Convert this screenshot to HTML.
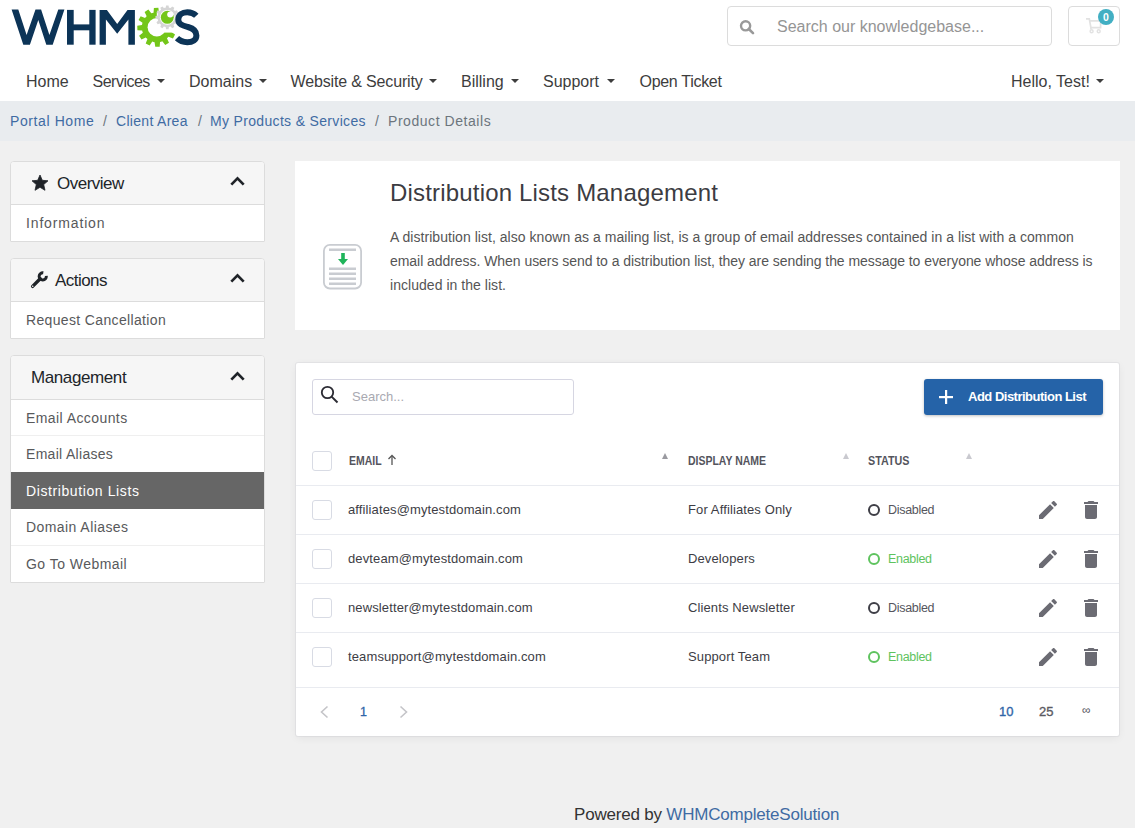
<!DOCTYPE html>
<html><head><meta charset="utf-8">
<style>
*{box-sizing:border-box;margin:0;padding:0}
html,body{width:1135px;height:828px;overflow:hidden}
body{background:#f0f0f0;font-family:"Liberation Sans",sans-serif;position:relative}
.a{position:absolute}
.t{position:absolute;white-space:nowrap;line-height:1}
#hdr{left:0;top:0;width:1135px;height:101px;background:#fff}
#bc{left:0;top:101px;width:1135px;height:40px;background:#e9ecef}
.nav{font-size:16px;color:#3d3d3d;top:73.5px}
.caret{position:absolute;width:0;height:0;border-left:4px solid transparent;border-right:4px solid transparent;border-top:4.5px solid #3d3d3d;top:79px}
.bcl{font-size:14px;color:#3f6ba3;top:113.5px}
.bcs{font-size:14px;color:#6c757d;top:113.5px}
.card{position:absolute;left:10px;width:255px;background:#fff;border:1px solid #dcdcdc;border-radius:4px 4px 1px 1px;overflow:hidden}
.ch{position:absolute;left:0;top:0;width:253px;height:43px;background:#f6f6f6;border-bottom:1px solid #dcdcdc}
.ct{font-size:17px;color:#212529}
.ci{font-size:14px;color:#58595b}
.sep{position:absolute;left:0;width:253px;height:1px;background:#efefef}
.chev{position:absolute;width:10px;height:10px;border-left:2.4px solid #1f2328;border-top:2.4px solid #1f2328;transform:rotate(45deg)}
.panel{position:absolute;left:295px;width:825px;background:#fff}
.rt{font-size:13px;color:#3d3d45;letter-spacing:0.12px}
.th{font-size:12px;font-weight:bold;color:#54545c}
.cb{position:absolute;left:312px;width:20px;height:20px;border:1px solid #d8dbe4;border-radius:3px;background:#fff}
.rsep{position:absolute;left:296px;width:823px;height:1px;background:#e9ebf0}
.st{position:absolute;left:868px;width:12px;height:12px;border-radius:50%;border:2.2px solid #3e3e46}
.st.on{border-color:#5ec35e}
.stt{font-size:12.5px;color:#55555d;letter-spacing:-0.3px}
.stt.on{color:#5ec35e}
.sorttri{position:absolute;width:0;height:0;border-left:3px solid transparent;border-right:3px solid transparent;border-bottom:6px solid #c9c9cf}
</style></head><body>
<div id="hdr" class="a"></div>
<div id="bc" class="a"></div>

<!-- logo -->
<svg class="a" style="left:0;top:0" width="210" height="55" viewBox="0 0 210 55">
  <g fill="#0c3457">
    <polygon points="11.6,9.6 18.3,9.6 26.6,35.1 35.5,9.6 41.1,9.6 49.4,35.1 58.3,9.6 64.4,9.6 52.7,44.8 46.3,44.8 38.3,20.1 29.9,44.8 23.3,44.8"/>
    <rect x="67" y="9.9" width="6.7" height="34.8"/>
    <rect x="89.3" y="9.9" width="6.3" height="34.8"/>
    <rect x="70" y="24.4" width="22" height="5.9"/>
    <polygon points="99.6,9.9 106.9,9.9 117.2,24.1 127.5,9.9 134.9,9.9 134.9,44.7 128.4,44.7 128.4,19.4 117.2,33.8 105.9,19.4 105.9,44.7 99.6,44.7"/>
  </g>
  <!-- green gear -->
  <path d="M171.14,22.91 L171.44,24.05 L176.18,24.40 L176.34,28.84 L171.64,29.52 L171.42,30.67 L171.11,31.81 L175.04,34.48 L172.95,38.40 L168.54,36.64 L167.77,37.53 L166.93,38.36 L169.00,42.64 L165.24,44.99 L162.30,41.26 L161.19,41.64 L160.05,41.94 L159.70,46.68 L155.26,46.84 L154.58,42.14 L153.43,41.92 L152.29,41.61 L149.62,45.54 L145.70,43.45 L147.46,39.04 L146.57,38.27 L145.74,37.43 L141.46,39.50 L139.11,35.74 L142.84,32.80 L142.46,31.69 L142.16,30.55 L137.42,30.20 L137.26,25.76 L141.96,25.08 L142.18,23.93 L142.49,22.79 L138.56,20.12 L140.65,16.20 L145.06,17.96 L145.83,17.07 L146.67,16.24 L144.60,11.96 L148.36,9.61 L151.30,13.34 L152.41,12.96 L153.55,12.66 L153.90,7.92 L158.34,7.76 L159.02,12.46 L160.17,12.68 L161.31,12.99 L163.98,9.06 L167.90,11.15 L166.14,15.56 L167.03,16.33 L167.86,17.17 L172.14,15.10 L174.49,18.86 L170.76,21.80Z" fill="#74c619"/>
  <circle cx="156.8" cy="27.3" r="9.2" fill="#fff"/>
  <rect x="156.8" y="13" width="22" height="19.6" fill="#fff"/>
  <!-- gray gear -->
  <path d="M176.77,14.76 L176.97,15.68 L179.13,16.06 L179.13,18.54 L176.97,18.92 L176.77,19.84 L176.48,20.73 L178.17,22.14 L176.93,24.29 L174.86,23.53 L174.23,24.23 L173.53,24.86 L174.29,26.93 L172.14,28.17 L170.73,26.48 L169.84,26.77 L168.92,26.97 L168.54,29.13 L166.06,29.13 L165.68,26.97 L164.76,26.77 L163.87,26.48 L162.46,28.17 L160.31,26.93 L161.07,24.86 L160.37,24.23 L159.74,23.53 L157.67,24.29 L156.43,22.14 L158.12,20.73 L157.83,19.84 L157.63,18.92 L155.47,18.54 L155.47,16.06 L157.63,15.68 L157.83,14.76 L158.12,13.87 L156.43,12.46 L157.67,10.31 L159.74,11.07 L160.37,10.37 L161.07,9.74 L160.31,7.67 L162.46,6.43 L163.87,8.12 L164.76,7.83 L165.68,7.63 L166.06,5.47 L168.54,5.47 L168.92,7.63 L169.84,7.83 L170.73,8.12 L172.14,6.43 L174.29,7.67 L173.53,9.74 L174.23,10.37 L174.86,11.07 L176.93,10.31 L178.17,12.46 L176.48,13.87Z" fill="#d5d5d5"/>
  <circle cx="167.3" cy="17.3" r="7.4" fill="#fff"/>
  <circle cx="167.3" cy="17.3" r="6.5" fill="#74c619"/>
  <circle cx="170.2" cy="14.5" r="3" fill="#fff"/>
  <path d="M196.3,15.8 C193.5,12.8 190.5,12.2 187.3,12.2 C182.3,12.2 178.3,14.8 178.3,19.5 C178.3,24.5 183,25.6 188,27 C193,28.4 196.4,30.6 196.4,35.4 C196.4,40 192.6,42.2 187.3,42.2 C183,42.2 179.8,41 177,38.2" fill="none" stroke="#0c3457" stroke-width="6"/>
</svg>

<!-- search -->
<div class="a" style="left:727px;top:6px;width:325px;height:40px;border:1px solid #dcdcdc;border-radius:4px;background:#fff"></div>
<svg class="a" style="left:738px;top:18px" width="18" height="18" viewBox="0 0 18 18"><circle cx="7.6" cy="7.8" r="4.6" fill="none" stroke="#999" stroke-width="2.4"/><line x1="10.8" y1="11" x2="15" y2="15.2" stroke="#999" stroke-width="2.6" stroke-linecap="round"/></svg>
<div class="t" style="left:777px;top:18.5px;font-size:16px;color:#959595">Search our knowledgebase...</div>

<!-- cart -->
<div class="a" style="left:1068px;top:6px;width:52px;height:40px;border:1px solid #dcdcdc;border-radius:4px;background:#fff"></div>
<svg class="a" style="left:1080px;top:8px" width="38" height="30" viewBox="0 0 38 30"><path d="M6,10.9 H9.3 L10.9,19.5 V21.2 M10.6,19.6 H20.6 V12.8 H9.7" fill="none" stroke="#e2e2e2" stroke-width="1.7"/><circle cx="11.6" cy="23.2" r="1.5" fill="none" stroke="#e2e2e2" stroke-width="1.4"/><circle cx="18.7" cy="23.2" r="1.5" fill="none" stroke="#e2e2e2" stroke-width="1.4"/></svg>
<div class="a" style="left:1098px;top:9px;width:16px;height:16px;border-radius:50%;background:#42afc3"></div>
<div class="t" style="left:1103px;top:12px;font-size:10.5px;font-weight:bold;color:#fff">0</div>

<!-- nav -->
<div class="t nav" style="left:26px">Home</div>
<div class="t nav" style="left:92.5px;letter-spacing:-0.5px">Services</div><div class="caret" style="left:157px"></div>
<div class="t nav" style="left:189px">Domains</div><div class="caret" style="left:259px"></div>
<div class="t nav" style="left:290.5px;letter-spacing:-0.15px">Website &amp; Security</div><div class="caret" style="left:429px"></div>
<div class="t nav" style="left:461px">Billing</div><div class="caret" style="left:511px"></div>
<div class="t nav" style="left:543px">Support</div><div class="caret" style="left:607px"></div>
<div class="t nav" style="left:639.5px;letter-spacing:-0.3px">Open Ticket</div>
<div class="t nav" style="left:1011px">Hello, Test!</div><div class="caret" style="left:1096px"></div>

<!-- breadcrumb -->
<div class="t bcl" style="left:10px;letter-spacing:0.6px">Portal Home</div>
<div class="t bcs" style="left:103px">/</div>
<div class="t bcl" style="left:116px;letter-spacing:0.3px">Client Area</div>
<div class="t bcs" style="left:198px">/</div>
<div class="t bcl" style="left:210px;letter-spacing:0.33px">My Products &amp; Services</div>
<div class="t bcs" style="left:375px">/</div>
<div class="t bcs" style="left:388px;letter-spacing:0.55px">Product Details</div>

<!-- sidebar -->
<div class="card" style="top:161px;height:81px">
  <div class="ch"></div>
</div>
<svg class="a" style="left:31px;top:174px" width="18" height="18" viewBox="0 0 18 18"><path d="M9,1 L11.3,6.3 L17,6.8 L12.7,10.6 L14,16.3 L9,13.3 L4,16.3 L5.3,10.6 L1,6.8 L6.7,6.3Z" fill="#1f2328" stroke="#1f2328" stroke-width="0.8" stroke-linejoin="round"/></svg>
<div class="t ct" style="left:57px;top:174.5px;letter-spacing:-0.5px">Overview</div>
<svg class="a" style="left:228px;top:174px" width="20" height="14" viewBox="0 0 20 14"><polyline points="3.3,10.6 9.5,4.4 15.7,10.6" fill="none" stroke="#1f2328" stroke-width="2.7"/></svg>
<div class="t ci" style="left:26px;top:216px;letter-spacing:0.85px">Information</div>

<div class="card" style="top:258px;height:81px">
  <div class="ch"></div>
</div>
<svg class="a" style="left:30px;top:271px" width="18" height="18" viewBox="0 0 18 18"><path d="M2.6,15.4 L10.2,7.8" stroke="#1f2328" stroke-width="3.4" stroke-linecap="round"/><path d="M16.3,4.9 A3.6,3.6 0 1 1 13.3,1.8" fill="none" stroke="#1f2328" stroke-width="2.9"/><circle cx="2.7" cy="15.3" r="0.8" fill="#f6f6f6"/></svg>
<div class="t ct" style="left:55px;top:271.5px;letter-spacing:-0.55px">Actions</div>
<svg class="a" style="left:228px;top:271px" width="20" height="14" viewBox="0 0 20 14"><polyline points="3.3,10.6 9.5,4.4 15.7,10.6" fill="none" stroke="#1f2328" stroke-width="2.7"/></svg>
<div class="t ci" style="left:26px;top:313px;letter-spacing:0.35px">Request Cancellation</div>

<div class="card" style="top:355px;height:228px">
  <div class="ch" style="height:44px"></div>
</div>
<div class="t ct" style="left:31px;top:369px;letter-spacing:-0.4px">Management</div>
<svg class="a" style="left:228px;top:369px" width="20" height="14" viewBox="0 0 20 14"><polyline points="3.3,10.6 9.5,4.4 15.7,10.6" fill="none" stroke="#1f2328" stroke-width="2.7"/></svg>
<div class="t ci" style="left:26px;top:411px;letter-spacing:0.42px">Email Accounts</div>
<div class="sep" style="left:11px;top:435px"></div>
<div class="t ci" style="left:26px;top:447px;letter-spacing:0.3px">Email Aliases</div>
<div class="a" style="left:11px;top:472px;width:253px;height:37px;background:#666"></div>
<div class="t ci" style="left:26px;top:484px;color:#fff;letter-spacing:0.6px">Distribution Lists</div>
<div class="t ci" style="left:26px;top:520px;letter-spacing:0.43px">Domain Aliases</div>
<div class="sep" style="left:11px;top:545px"></div>
<div class="t ci" style="left:26px;top:557px;letter-spacing:0.46px">Go To Webmail</div>

<!-- panel 1 -->
<div class="panel" style="top:161px;height:169px"></div>
<svg class="a" style="left:322px;top:243px" width="42" height="48" viewBox="0 0 42 48">
  <rect x="1.9" y="1.9" width="37.2" height="43.6" rx="6" fill="#fff" stroke="#c9ccd1" stroke-width="1.8"/>
  <rect x="7" y="5.5" width="27" height="2.5" fill="#c9ccd1"/>
  <rect x="7" y="24.5" width="27" height="2.5" fill="#c9ccd1"/>
  <rect x="7" y="29.5" width="27" height="2.5" fill="#c9ccd1"/>
  <rect x="7" y="34.5" width="27" height="2.5" fill="#c9ccd1"/>
  <rect x="7" y="39.5" width="27" height="2.5" fill="#c9ccd1"/>
  <rect x="19.2" y="10" width="3.6" height="7.5" fill="#1fb45a"/>
  <polygon points="16,16 26,16 21,22" fill="#1fb45a"/>
</svg>
<div class="t" style="left:390px;top:181px;font-size:24px;color:#3c3c42;letter-spacing:0.18px">Distribution Lists Management</div>
<div class="a" style="left:390px;top:225px;white-space:nowrap;font-size:14px;line-height:24px;color:#555;letter-spacing:0.04px">A distribution list, also known as a mailing list, is a group of email addresses contained in a list with a common<br><span style="letter-spacing:-0.05px">email address. When users send to a distribution list, they are sending the message to everyone whose address is</span><br>included in the list.</div>

<!-- panel 2 -->
<div class="panel" style="left:296px;width:823px;top:363px;height:373px;border-radius:2px;box-shadow:0 0 0 1px rgba(30,40,70,0.05),0 2px 8px rgba(0,0,0,0.06)"></div>
<div class="a" style="left:312px;top:379px;width:262px;height:36px;border:1px solid #d6d6e2;border-radius:3px;background:#fff"></div>
<svg class="a" style="left:318px;top:383px" width="24" height="24" viewBox="0 0 24 24"><circle cx="9.5" cy="9.5" r="5.7" fill="none" stroke="#2b2b33" stroke-width="1.8"/><line x1="13.6" y1="13.6" x2="19.5" y2="19.5" stroke="#2b2b33" stroke-width="2"/></svg>
<div class="t" style="left:352px;top:390px;font-size:13px;color:#a9a9b1">Search...</div>

<div class="a" style="left:924px;top:379px;width:179px;height:36px;background:#2563a8;border-radius:3px;box-shadow:0 1px 3px rgba(0,0,0,0.25)"></div>
<svg class="a" style="left:938px;top:389px" width="16" height="16" viewBox="0 0 16 16"><rect x="7" y="1" width="2.2" height="14" fill="#fff"/><rect x="1" y="7" width="14" height="2.2" fill="#fff"/></svg>
<div class="t" style="left:968px;top:390px;font-size:13px;font-weight:bold;color:#fff;letter-spacing:-0.5px">Add Distribution List</div>

<!-- table header -->
<div class="cb" style="top:451px"></div>
<div class="t th" style="left:348.5px;top:454.5px;transform:scaleX(0.873);transform-origin:0 0">EMAIL</div>
<svg class="a" style="left:386px;top:453px" width="12" height="13" viewBox="0 0 12 13"><line x1="6" y1="3" x2="6" y2="12" stroke="#555" stroke-width="1.3"/><polyline points="2.5,6 6,2.5 9.5,6" fill="none" stroke="#555" stroke-width="1.3"/></svg>
<div class="sorttri" style="left:662px;top:452.5px;border-bottom-color:#9a9aa0"></div>
<div class="t th" style="left:688px;top:454.5px;transform:scaleX(0.873);transform-origin:0 0">DISPLAY NAME</div>
<div class="sorttri" style="left:843px;top:452.5px"></div>
<div class="t th" style="left:868px;top:454.5px;transform:scaleX(0.895);transform-origin:0 0">STATUS</div>
<div class="sorttri" style="left:966px;top:452.5px"></div>
<div class="rsep" style="top:485px"></div>

<!-- rows -->
<div class="cb" style="top:500px"></div>
<div class="t rt" style="left:348px;top:502.7px">affiliates@mytestdomain.com</div>
<div class="t rt" style="left:688px;top:502.7px">For Affiliates Only</div>
<div class="st" style="top:504px"></div><div class="t stt" style="left:888px;top:503.7px">Disabled</div>
<div class="rsep" style="top:534px"></div>

<div class="cb" style="top:549px"></div>
<div class="t rt" style="left:348px;top:551.7px">devteam@mytestdomain.com</div>
<div class="t rt" style="left:688px;top:551.7px">Developers</div>
<div class="st on" style="top:553px"></div><div class="t stt on" style="left:888px;top:552.7px">Enabled</div>
<div class="rsep" style="top:583px"></div>

<div class="cb" style="top:598px"></div>
<div class="t rt" style="left:348px;top:600.7px">newsletter@mytestdomain.com</div>
<div class="t rt" style="left:688px;top:600.7px">Clients Newsletter</div>
<div class="st" style="top:602px"></div><div class="t stt" style="left:888px;top:601.7px">Disabled</div>
<div class="rsep" style="top:632px"></div>

<div class="cb" style="top:647px"></div>
<div class="t rt" style="left:348px;top:649.7px">teamsupport@mytestdomain.com</div>
<div class="t rt" style="left:688px;top:649.7px">Support Team</div>
<div class="st on" style="top:651px"></div><div class="t stt on" style="left:888px;top:650.7px">Enabled</div>
<div class="rsep" style="top:687px"></div>

<!-- action icons -->
<svg class="a" style="left:1036px;top:498px" width="24" height="24" viewBox="0 0 24 24"><path d="M3,17.25V21h3.75L17.81,9.94l-3.75-3.75L3,17.25z M20.71,7.04c0.39-0.39,0.39-1.02,0-1.41l-2.34-2.34c-0.39-0.39-1.02-0.39-1.41,0l-1.83,1.83l3.75,3.75L20.71,7.04z" fill="#6b6b73"/></svg>
<svg class="a" style="left:1079px;top:498px" width="24" height="24" viewBox="0 0 24 24"><path d="M6,19c0,1.1,0.9,2,2,2h8c1.1,0,2-0.9,2-2V7H6V19z M19,4h-3.5l-1-1h-5l-1,1H5v2h14V4z" fill="#6b6b73"/></svg>
<svg class="a" style="left:1036px;top:547px" width="24" height="24" viewBox="0 0 24 24"><path d="M3,17.25V21h3.75L17.81,9.94l-3.75-3.75L3,17.25z M20.71,7.04c0.39-0.39,0.39-1.02,0-1.41l-2.34-2.34c-0.39-0.39-1.02-0.39-1.41,0l-1.830,1.83l3.75,3.75L20.71,7.04z" fill="#6b6b73"/></svg>
<svg class="a" style="left:1079px;top:547px" width="24" height="24" viewBox="0 0 24 24"><path d="M6,19c0,1.1,0.9,2,2,2h8c1.1,0,2-0.9,2-2V7H6V19z M19,4h-3.5l-1-1h-5l-1,1H5v2h14V4z" fill="#6b6b73"/></svg>
<svg class="a" style="left:1036px;top:596px" width="24" height="24" viewBox="0 0 24 24"><path d="M3,17.25V21h3.75L17.81,9.94l-3.750-3.75L3,17.25z M20.71,7.04c0.39-0.39,0.39-1.02,0-1.41l-2.34-2.34c-0.39-0.39-1.02-0.39-1.41,0l-1.83,1.83l3.75,3.75L20.71,7.04z" fill="#6b6b73"/></svg>
<svg class="a" style="left:1079px;top:596px" width="24" height="24" viewBox="0 0 24 24"><path d="M6,19c0,1.1,0.9,2,2,2h8c1.1,0,2-0.9,2-2V7H6V19z M19,4h-3.5l-1-1h-5l-1,1H5v2h14V4z" fill="#6b6b73"/></svg>
<svg class="a" style="left:1036px;top:645px" width="24" height="24" viewBox="0 0 24 24"><path d="M3,17.25V21h3.75L17.81,9.94l-3.75-3.75L3,17.25z M20.71,7.04c0.39-0.39,0.39-1.02,0-1.41l-2.34-2.34c-0.39-0.39-1.02-0.39-1.41,0l-1.83,1.83l3.75,3.75L20.71,7.04z" fill="#6b6b73"/></svg>
<svg class="a" style="left:1079px;top:645px" width="24" height="24" viewBox="0 0 24 24"><path d="M6,19c0,1.1,0.9,2,2,2h8c1.1,0,2-0.9,2-2V7H6V19z M19,4h-3.5l-1-1h-5l-1,1H5v2h14V4z" fill="#6b6b73"/></svg>

<!-- pager -->
<svg class="a" style="left:318px;top:704px" width="14" height="16" viewBox="0 0 14 16"><polyline points="9.5,2.5 3.5,8 9.5,13.5" fill="none" stroke="#c4c4c8" stroke-width="1.6"/></svg>
<div class="t" style="left:360px;top:705.5px;font-size:12.5px;-webkit-text-stroke:0.3px #2f66a8;color:#2f66a8">1</div>
<svg class="a" style="left:396px;top:704px" width="14" height="16" viewBox="0 0 14 16"><polyline points="4.5,2.5 10.5,8 4.5,13.5" fill="none" stroke="#c4c4c8" stroke-width="1.6"/></svg>
<div class="t" style="left:999px;top:704.5px;font-size:13px;-webkit-text-stroke:0.35px #2f66a8;color:#2f66a8">10</div>
<div class="t" style="left:1039px;top:704.5px;font-size:13px;-webkit-text-stroke:0.35px #5a5a62;color:#5a5a62">25</div>
<div class="t" style="left:1082px;top:704px;font-size:12px;color:#55555d">∞</div>

<!-- footer -->
<div class="t" style="left:574px;top:806px;font-size:17px;color:#333;letter-spacing:-0.2px">Powered by <span style="color:#3f6ba3">WHMCompleteSolution</span></div>
</body></html>
